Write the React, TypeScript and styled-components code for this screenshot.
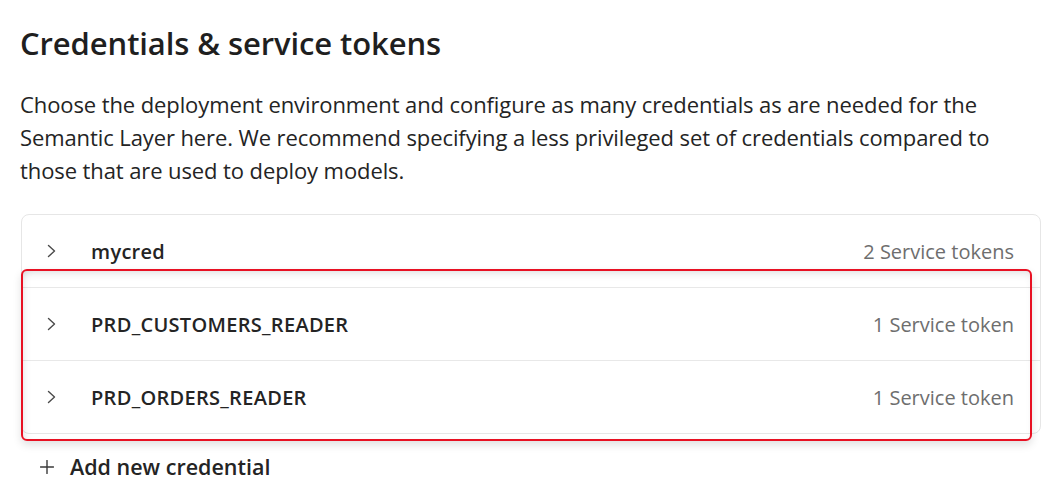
import React from "react";
import styled, { createGlobalStyle } from "styled-components";

const Global = createGlobalStyle`
  html, body { margin: 0; padding: 0; background: #ffffff; }
  body { font-family: "Segoe UI", "Open Sans", "Noto Sans", sans-serif; color: #1f1f1f; }
`;

const Page = styled.div`
  padding: 20px 22px 0 20px;
  width: 1063px;
  box-sizing: border-box;
`;

const Title = styled.h1`
  margin: 0;
  font-size: 31px;
  font-weight: 600;
  line-height: 46px;
  color: #1f1f1f;
  letter-spacing: -0.1px;
`;

const Description = styled.p`
  margin: 22px 0 0 0;
  font-size: 22px;
  line-height: 33px;
  color: #242424;
  letter-spacing: -0.1px;
`;

const CardWrap = styled.div`
  position: relative;
  margin-top: 27px;
  margin-left: 1px;
`;

const Card = styled.div`
  border: 1px solid #e6e6e6;
  border-radius: 8px;
  background: #fff;
  overflow: hidden;
`;

const Row = styled.div<{ $first?: boolean }>`
  display: flex;
  align-items: center;
  height: 72px;
  padding: 0 26px 0 24px;
  border-top: ${(p) => (p.$first ? "none" : "1px solid #e8e8e8")};
`;

const Chevron = styled.span`
  display: flex;
  width: 45px;
  color: #444;
`;

const Name = styled.span`
  flex: 1;
  font-size: 20px;
  font-weight: 600;
  color: #242424;
  letter-spacing: 0.3px;
`;

const Count = styled.span`
  font-size: 20px;
  color: #6e6e6e;
`;

const Highlight = styled.div`
  position: absolute;
  left: 0;
  top: 55px;
  width: 1011px;
  height: 172px;
  box-sizing: border-box;
  border: 2px solid #e81123;
  border-radius: 6px;
  pointer-events: none;
  box-shadow: 0 4px 8px rgba(0, 0, 0, 0.12), inset 0 6px 8px -4px rgba(0, 0, 0, 0.12),
    inset 6px 0 8px -5px rgba(0, 0, 0, 0.08);
`;

const AddButton = styled.button`
  display: flex;
  align-items: center;
  gap: 16px;
  margin-top: 18px;
  margin-left: 20px;
  padding: 0;
  border: none;
  background: none;
  font-family: inherit;
  font-size: 21.5px;
  font-weight: 600;
  color: #242424;
  cursor: pointer;
`;

const ChevronIcon = () => (
  <svg width="12" height="14" viewBox="0 0 12 14" fill="none">
    <path d="M2.5 1.5 L8.5 7 L2.5 12.5" stroke="#4a4a4a" strokeWidth="1.4" strokeLinecap="round" strokeLinejoin="round" />
  </svg>
);

const PlusIcon = () => (
  <svg width="14" height="14" viewBox="0 0 14 14" fill="none">
    <path d="M7 0.5 V13.5 M0.5 7 H13.5" stroke="#3a3a3a" strokeWidth="1.4" strokeLinecap="round" />
  </svg>
);

const creds = [
  { name: "mycred", count: "2 Service tokens" },
  { name: "PRD_CUSTOMERS_READER", count: "1 Service token" },
  { name: "PRD_ORDERS_READER", count: "1 Service token" },
];

export default function App() {
  return (
    <>
      <Global />
      <Page>
        <Title>Credentials &amp; service tokens</Title>
        <Description>
          Choose the deployment environment and configure as many credentials as are needed for the
          <br />
          Semantic Layer here. We recommend specifying a less privileged set of credentials compared to
          <br />
          those that are used to deploy models.
        </Description>
        <CardWrap>
          <Card>
            {creds.map((c, i) => (
              <Row key={c.name} $first={i === 0}>
                <Chevron>
                  <ChevronIcon />
                </Chevron>
                <Name>{c.name}</Name>
                <Count>{c.count}</Count>
              </Row>
            ))}
          </Card>
          <Highlight />
        </CardWrap>
        <AddButton>
          <PlusIcon />
          Add new credential
        </AddButton>
      </Page>
    </>
  );
}
